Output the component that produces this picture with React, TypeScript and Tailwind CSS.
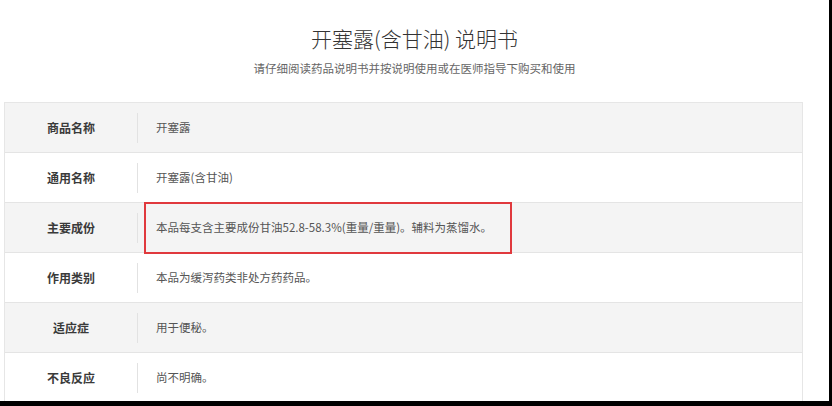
import React from "react";

const rows: { label: string; value: string; gray: boolean }[] = [
  { label: "商品名称", value: "开塞露", gray: true },
  { label: "通用名称", value: "开塞露(含甘油)", gray: false },
  { label: "主要成份", value: "本品每支含主要成份甘油52.8-58.3%(重量/重量)。辅料为蒸馏水。", gray: true },
  { label: "作用类别", value: "本品为缓泻药类非处方药药品。", gray: false },
  { label: "适应症", value: "用于便秘。", gray: true },
  { label: "不良反应", value: "尚不明确。", gray: false },
];

export default function App() {
  return (
    <div
      className="w-[832px] h-[406px] bg-black overflow-hidden"
      style={{ fontFamily: '"Noto Sans CJK SC", "Noto Sans", sans-serif' }}
    >
      <div className="relative w-[829px] h-[401px] bg-white overflow-hidden flex flex-col">
        <div className="pt-[23px] flex flex-col items-center">
          <div className="h-[30px] leading-[30px] text-[21px] font-light text-[#333]">开塞露(含甘油) 说明书</div>
          <div className="mt-[6px] h-[18px] leading-[18px] text-[11.5px] text-[#666]">
            请仔细阅读药品说明书并按说明使用或在医师指导下购买和使用
          </div>
        </div>
        <div className="mt-[25px] ml-[4px] w-[799px] border-t border-l border-r border-[#e6e6e6]">
          {rows.map((r) => (
            <div
              key={r.label}
              className={
                "h-[50px] flex items-center border-b border-[#e4e4e4] " +
                (r.gray ? "bg-[#f4f4f4]" : "bg-white")
              }
            >
              <div className="w-[132px] text-center text-[12px] font-bold text-[#3a3a3a]">{r.label}</div>
              <div className="w-px h-[30px] bg-[#e2e2e2]" />
              <div className="pl-[18px] text-[11.5px] text-[#555]">{r.value}</div>
            </div>
          ))}
        </div>
        <div className="absolute left-[144px] top-[202px] w-[368px] h-[52px] border-2 border-[#e0393d]" />
      </div>
    </div>
  );
}
